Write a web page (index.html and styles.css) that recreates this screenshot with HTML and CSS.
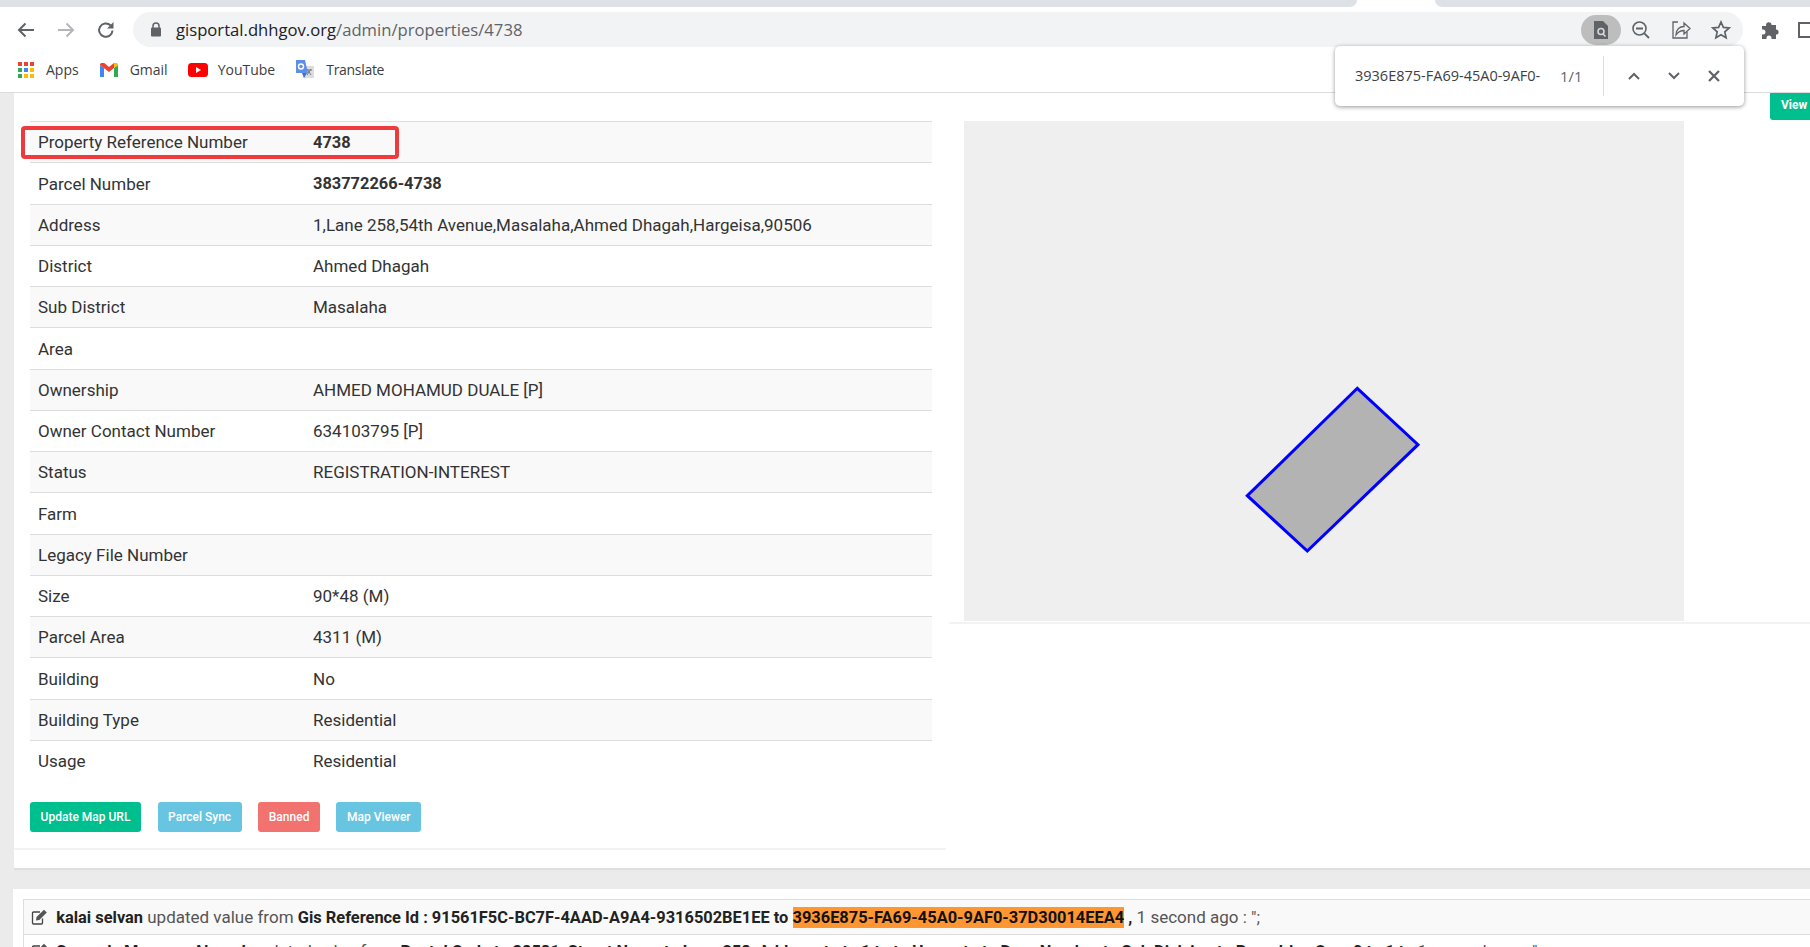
FILE: index.html
```html
<!DOCTYPE html>
<html lang="en">
<head>
<meta charset="utf-8">
<title>Property 4738</title>
<link rel="stylesheet" href="styles.css">
</head>
<body>
<header class="chrome">
  <div class="tabstrip"><div class="tab tab-left"></div><div class="tab-gap"></div><div class="tab tab-right"></div></div>
  <div class="toolbar">
    <svg class="nav" width="20" height="20" viewBox="0 0 20 20"><path d="M18 10H3M9.500 3.500 3 10l6.500 6.500" fill="none" stroke="#5f6368" stroke-width="2"/></svg>
    <svg class="nav" width="20" height="20" viewBox="0 0 20 20"><path d="M2 10h15M10.500 3.500 17 10l-6.500 6.500" fill="none" stroke="#b4b6b9" stroke-width="2"/></svg>
    <svg class="nav" width="20" height="20" viewBox="0 0 20 20"><path d="M16.500 10.500a6.700 6.700 0 1 1-2-5.200" fill="none" stroke="#5f6368" stroke-width="2"/><path d="M17.500 2v6.500H11z" fill="#5f6368"/></svg>
    <div class="omnibox">
      <svg class="lock" width="12" height="15" viewBox="0 0 12 15"><path d="M3 6V4a3 3 0 0 1 6 0v2" fill="none" stroke="#5f6368" stroke-width="1.500"/><rect x="1" y="5.500" width="10" height="9" rx="1" fill="#5f6368"/></svg>
      <span class="url"><span class="host">gisportal.dhhgov.org</span>/admin/properties/4738</span>
      <span class="pill"><svg width="16" height="18" viewBox="0 0 16 18"><path d="M1 0h9l5 5v13H1z" fill="#5f6368"/><circle cx="8" cy="10.500" r="3" fill="none" stroke="#d8d8d8" stroke-width="1.600"/><path d="m10 13 2.500 2.500" stroke="#d8d8d8" stroke-width="1.600"/></svg></span>
      <svg class="omni-icon" width="20" height="20" viewBox="0 0 20 20"><circle cx="8.500" cy="8.500" r="6.500" fill="none" stroke="#5f6368" stroke-width="1.600"/><path d="M5 8.500h7M13.300 13.300 18 18" stroke="#5f6368" stroke-width="1.800" fill="none"/></svg>
      <svg class="omni-icon" width="20" height="20" viewBox="0 0 20 20"><path d="M7 2H2v16h14v-6" fill="none" stroke="#5f6368" stroke-width="1.300"/><path d="M5 15c0-6 4-8.500 8-8.500V3l6 5.500-6 5.500v-3.500c-4 0-6 1.500-8 4.500z" fill="none" stroke="#5f6368" stroke-width="1.300"/></svg>
      <svg class="omni-icon" width="20" height="20" viewBox="0 0 20 20"><path d="m10 2 2.400 5.400 5.800.6-4.400 3.900 1.300 5.800L10 14.700l-5.100 3 1.300-5.800L1.800 8l5.800-.6z" fill="none" stroke="#5f6368" stroke-width="1.700"/></svg>
    </div>
    <svg class="puzzle" width="20" height="20" viewBox="0 0 20 20"><path d="M1 7h4.200a2.800 2.800 0 1 1 5.400-1V6H15v4.400a2.600 2.600 0 1 1 0 5.200V20H10.500v-1a2.500 2.500 0 0 0-5 0v1H1v-4.500h1a2.500 2.500 0 0 0 0-5H1z" fill="#5f6368" transform="translate(1 -1)"/></svg>
    <svg class="panel" width="14" height="20" viewBox="0 0 14 20"><path d="M1 3h16v14H1z" fill="none" stroke="#5f6368" stroke-width="2"/></svg>
  </div>
  <nav class="bookmarks">
    <a class="bm bm-apps">
      <svg width="16" height="16" viewBox="0 0 16 16"><g fill="#ea4335"><rect width="4" height="4"/><rect x="6" width="4" height="4"/><rect x="12" width="4" height="4"/></g><rect y="6" width="4" height="4" fill="#34a853"/><rect x="6" y="6" width="4" height="4" fill="#4285f4"/><rect x="12" y="6" width="4" height="4" fill="#fbbc04"/><rect y="12" width="4" height="4" fill="#34a853"/><rect x="6" y="12" width="4" height="4" fill="#fbbc04"/><rect x="12" y="12" width="4" height="4" fill="#fbbc04"/></svg>
      Apps</a>
    <a class="bm bm-gmail">
      <svg width="18" height="14" viewBox="0 0 18 14"><path d="M0 2v12h4V5z" fill="#4285f4"/><path d="M14 5v9h4V2z" fill="#34a853"/><path d="M0 2 9 9l5-4V0l-5 4-4-3.500C2.500-1 0 0 0 2z" fill="#ea4335"/><path d="M14 0v5l4-3c0-2-2.500-3-4-2z" fill="#fbbc04"/></svg>
      Gmail</a>
    <a class="bm bm-yt">
      <svg width="20" height="14" viewBox="0 0 20 14"><rect width="20" height="14" rx="3.500" fill="#f00"/><path d="m8 4 5 3-5 3z" fill="#fff"/></svg>
      YouTube</a>
    <a class="bm bm-tr">
      <svg width="20" height="20" viewBox="0 0 20 20"><rect x="8" y="6" width="11" height="12" rx="1" fill="#dcdcdc"/><path d="m12 9 4 6M16 9l-4 6M11 10h6" stroke="#777" fill="none"/><path d="M1 0h9l3 13H1z" fill="#5c8fe8" /><path d="m7 13 2 5 3-5z" fill="#3f6fd0"/><circle cx="6" cy="6.500" r="2.500" fill="none" stroke="#fff" stroke-width="1.400"/></svg>
      <span class="bm-tr-label">Translate</span></a>
  </nav>
</header>

<main class="page">
  <section class="card">
    <div class="left">
      <div class="details">
        <div class="row"><span class="label">Property Reference Number</span><strong class="value">4738</strong></div>
        <div class="row"><span class="label">Parcel Number</span><strong class="value">383772266-4738</strong></div>
        <div class="row"><span class="label">Address</span><span class="value">1,Lane 258,54th Avenue,Masalaha,Ahmed Dhagah,Hargeisa,90506</span></div>
        <div class="row"><span class="label">District</span><span class="value">Ahmed Dhagah</span></div>
        <div class="row"><span class="label">Sub District</span><span class="value">Masalaha</span></div>
        <div class="row"><span class="label">Area</span><span class="value"></span></div>
        <div class="row"><span class="label">Ownership</span><span class="value">AHMED MOHAMUD DUALE [P]</span></div>
        <div class="row"><span class="label">Owner Contact Number</span><span class="value">634103795 [P]</span></div>
        <div class="row"><span class="label">Status</span><span class="value">REGISTRATION-INTEREST</span></div>
        <div class="row"><span class="label">Farm</span><span class="value"></span></div>
        <div class="row"><span class="label">Legacy File Number</span><span class="value"></span></div>
        <div class="row"><span class="label">Size</span><span class="value">90*48 (M)</span></div>
        <div class="row"><span class="label">Parcel Area</span><span class="value">4311 (M)</span></div>
        <div class="row"><span class="label">Building</span><span class="value">No</span></div>
        <div class="row"><span class="label">Building Type</span><span class="value">Residential</span></div>
        <div class="row"><span class="label">Usage</span><span class="value">Residential</span></div>
      </div>
      <div class="actions">
        <a class="btn btn-green">Update Map URL</a>
        <a class="btn btn-blue">Parcel Sync</a>
        <a class="btn btn-red">Banned</a>
        <a class="btn btn-blue">Map Viewer</a>
      </div>
      <div class="callout"></div>
    </div>
    <div class="right">
      <div class="map">
        <svg width="720" height="500" viewBox="0 0 720 500"><path d="M393.300 267.300 454 323.700 343.300 430 283.300 374.700z" fill="#b3b3b3" stroke="#0000ff" stroke-width="3"/></svg>
      </div>
      <a class="btn btn-green btn-view">View</a>
    </div>
  </section>

  <section class="card-log">
    <div class="log">
      <div class="log-row log-row-odd">
        <svg class="edit" width="17" height="16" viewBox="0 0 17 16"><path d="M11.500 9.500V14a1 1 0 0 1-1 1h-8a1 1 0 0 1-1-1V4a1 1 0 0 1 1-1H9" fill="none" stroke="#444" stroke-width="1.300"/><path d="M5.500 8 13 .8l2.800 2.800-7.500 7.300-3.300.5z" fill="#555"/></svg>
        <b>kalai selvan</b> updated value from <b>Gis Reference Id : 91561F5C-BC7F-4AAD-A9A4-9316502BE1EE to</b> <mark class="hit">3936E875-FA69-45A0-9AF0-37D30014EEA4</mark> <b>,</b> 1 second ago : ";
      </div>
      <div class="log-row log-row-next">
        <svg class="edit" width="17" height="16" viewBox="0 0 17 16"><path d="M11.500 9.500V14a1 1 0 0 1-1 1h-8a1 1 0 0 1-1-1V4a1 1 0 0 1 1-1H9" fill="none" stroke="#444" stroke-width="1.300"/><path d="M5.500 8 13 .8l2.800 2.800-7.500 7.300-3.300.5z" fill="#555"/></svg>
        <b>Somaaly Mansoor Ahmed</b> updated value from <b>Rental Code to 38581, Street Name to Lane 258, Address to to 1 to to House to to Door Number to Sub Division to Boundries Over 0 to 1 to</b> 1 second ago : ";
      </div>
    </div>
  </section>

  <aside class="find">
    <span class="find-text">3936E875-FA69-45A0-9AF0-</span>
    <span class="find-count">1/1</span>
    <span class="find-sep"></span>
    <svg class="find-btn" width="14" height="14" viewBox="0 0 14 14"><path d="M2 10l5-5 5 5" fill="none" stroke="#5f6368" stroke-width="2"/></svg>
    <svg class="find-btn" width="14" height="14" viewBox="0 0 14 14"><path d="M2 4l5 5 5-5" fill="none" stroke="#5f6368" stroke-width="2"/></svg>
    <svg class="find-btn" width="14" height="14" viewBox="0 0 14 14"><path d="M2 2l10 10M12 2 2 12" fill="none" stroke="#5f6368" stroke-width="2.200"/></svg>
  </aside>
</main>
</body>
</html>
```
FILE: styles.css
```css
* { box-sizing: border-box; }
html, body { margin: 0; height: 947px; overflow: hidden; }
body { background: #ebebeb; font-family: Roboto, "Liberation Sans", sans-serif; color: #333; width: 1810px; }

/* browser chrome */
.chrome { background: #fff; border-bottom: 1px solid #dcdcdc; height: 93px; }
.tabstrip { display: flex; height: 7px; background: #fff; }
.tab { background: #dee1e6; height: 7px; }
.tab-left { width: 1357px; border-bottom-right-radius: 8px; }
.tab-gap { width: 78px; }
.tab-right { flex: 1; border-bottom-left-radius: 8px; }
.toolbar { display: flex; align-items: center; height: 40px; padding: 5px 0 0 16px; }
.nav { margin-right: 20px; flex: none; }
.omnibox { margin-left: -3px; width: 1610px; height: 35px; border-radius: 18px; background: #f1f3f4; display: flex; align-items: center; padding-left: 17px; position: relative; flex: none; }
.lock { flex: none; }
.url { margin-left: 14px; font: 16.650px "Open Sans", sans-serif; color: #5f6368; flex: 1; white-space: nowrap; }
.host { color: #202124; }
.pill { width: 40px; height: 30px; border-radius: 15px; background: #bdbdbd; display: flex; align-items: center; justify-content: center; margin-right: 10px; }
.omni-icon { flex: none; margin-right: 20px; }
.omni-icon:last-child { margin-right: 12px; }
.puzzle { margin-left: 17px; flex: none; }
.panel { margin-left: 18px; flex: none; }
.bookmarks { display: flex; align-items: center; height: 45px; padding-left: 18px; font: 14px "Open Sans", sans-serif; color: #3c4043; }
.bm { display: flex; align-items: center; white-space: nowrap; }
.bm-apps svg { margin-right: 12px; }
.bm-gmail { margin-left: 21px; }
.bm-gmail svg { margin-right: 12px; }
.bm-yt { margin-left: 20px; }
.bm-yt svg { margin-right: 10px; }
.bm-tr { margin-left: 20px; }
.bm-tr svg { margin-right: 11px; }
.bm-tr-label { letter-spacing: -.3px; }

/* page cards */
.page { position: relative; }
.card { margin-left: 14px; height: 777px; background: #fff; border-bottom: 2px solid #dedede; display: flex; align-items: flex-start; }
.left { width: 932px; height: 757px; padding: 28px 14px 0 16px; border-bottom: 2px solid #f3f3f3; position: relative; }
.row { display: flex; align-items: center; height: 41.250px; padding-top: .5px; border-top: 1px solid #ddd; font-size: 17px; color: #333; }
.row:nth-child(odd) { background: #f9f9f9; }
.label { width: 283px; padding-left: 8px; flex: none; }
.value { font-weight: 400; }
strong.value { font-weight: 700; font-size: 16.400px; }
.callout { position: absolute; left: 7px; top: 33px; width: 378px; height: 33px; border: 4px solid #ee3b3e; border-radius: 4px; }
.actions { display: flex; gap: 16.500px; margin-top: 21px; }
.btn { display: flex; align-items: center; height: 30px; padding: 0 10.600px; border-radius: 3px; color: #fff; font-size: 12px; font-weight: 500; white-space: nowrap; }
.btn-green { background: #00bf8f; }
.btn-blue { background: #68c5e2; }
.btn-red { background: #f27270; }
.right { flex: 1; margin-left: 3px; height: 531px; border-bottom: 2px solid #f3f3f3; padding-left: 15px; display: flex; justify-content: space-between; align-items: flex-start; }
.map { width: 720px; height: 500px; margin-top: 28px; background: #efefef; flex: none; }
.map svg { display: block; }
.btn-view { height: 27px; width: 40px; padding: 0 0 3px 11px; border-radius: 0 0 0 3px; overflow: hidden; font-weight: 700; }

/* activity log */
.card-log { margin: 19px 0 0 13px; background: #fff; padding: 10px 0 0 10px; height: 200px; }
.log { border: 1px solid #ddd; border-right: 0; }
.log-row { height: 35px; padding-left: 7px; font-size: 17px; line-height: 35px; color: #555; white-space: nowrap; overflow: hidden; border-top: 1px solid #ddd; }
.log-row:first-child { border-top: 0; height: 34px; }
.log-row-next { line-height: 32px; }
.log-row-odd { background: #f9f9f9; }
.log-row b { font-weight: 700; font-size: 16.400px; color: #222; }
.edit { vertical-align: -2px; margin-right: 4px; }
.hit { background: #ff9632; color: #111; font-weight: 700; font-size: 16.400px; padding: 1px 0; }

/* find-in-page bubble */
.find { position: absolute; left: 1335px; top: -47px; width: 409px; height: 60px; background: #fff; border-radius: 5px; box-shadow: 0 1px 4px rgba(60, 64, 67, .55); display: flex; align-items: center; padding-left: 20px; }
.find-text { flex: none; font: 14.500px "Open Sans", sans-serif; color: #3c4043; width: 205px; margin-bottom: 1px; white-space: nowrap; overflow: hidden; }
.find-count { flex: none; font: 14.800px "Open Sans", sans-serif; color: #5f6368; width: 43px; margin-bottom: 1px; }
.find-sep { flex: none; width: 1px; height: 40px; background: #dadce0; margin-right: 23px; }
.find-btn { margin-right: 26px; flex: none; }
.find-btn:last-child { margin-right: 0; }
```
